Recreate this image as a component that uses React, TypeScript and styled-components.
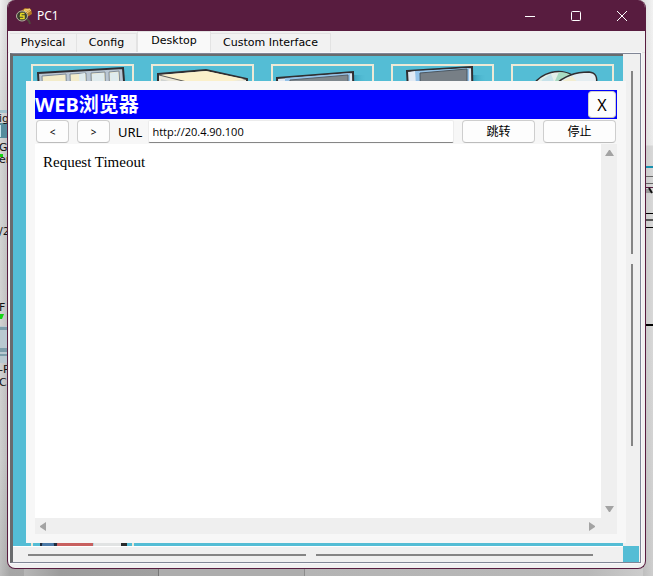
import React from "react";
import styled, { createGlobalStyle, css } from "styled-components";

const Global = createGlobalStyle`
  * { box-sizing: border-box; }
  html, body { margin: 0; overflow: hidden; }
  button, input { font: inherit; color: inherit; }
`;

const uiFont = `"Noto Sans", "Noto Sans CJK SC", sans-serif`;
const tabFont = `"DejaVu Sans", sans-serif`;

const Screen = styled.div`
  position: relative;
  height: 100vh;
  padding: 0 7px 7px;
  overflow: hidden;
  background: #dcdcdc;
`;

const Backdrop = styled.div<{ $side: "left" | "right" | "bottom" }>`
  position: absolute;
  overflow: hidden;
  ${(p) =>
    p.$side === "left" &&
    css`left: 0; top: 0; bottom: 0; width: 24px;
      background: linear-gradient(90deg, rgba(0,0,0,0), rgba(0,0,0,0.12) 10px), linear-gradient(#f0f0f0, #d6d6d6 25%, #cfcfcf 80%, #bcbcbc);`}
  ${(p) =>
    p.$side === "right" &&
    css`right: 0; top: 0; bottom: 0; width: 10px;
      background: linear-gradient(90deg, rgba(0,0,0,0.08), rgba(0,0,0,0)), linear-gradient(#f2f2f2, #ececec 145px, #d8d8d8 146px, #d8d8d8 60%, #cecece);`}
  ${(p) =>
    p.$side === "bottom" &&
    css`left: 0; right: 0; bottom: 0; height: 12px;
      background: linear-gradient(90deg, #c8c8c8, #9c9c9c 60px, #a0a0a0 158px, #777 158px, #777 159px, #adadad 159px, #adadad 304px, #8c8c8c 304px, #8c8c8c 305px, #b4b4b4 305px, #b8b8b8 90%, #d0d0d0);`}
`;

const DeviceLabel = styled.span<{ $top: number }>`
  position: absolute;
  left: -1px;
  top: ${(p) => p.$top}px;
  font: 11px/11px ${tabFont};
  color: #111;
  white-space: nowrap;
`;

const BackdropArt = styled.svg`
  position: absolute;
  inset: 0;
  display: block;
`;

const Window = styled.main`
  position: relative;
  display: flex;
  flex-direction: column;
  height: 100%;
  overflow: hidden;
  border: 1px solid #581c3f;
  border-top: 0;
  border-radius: 8px;
  background: #f0f0f0;
`;

const TitleBar = styled.header`
  display: flex;
  align-items: center;
  flex: none;
  height: 31px;
  padding-left: 8px;
  gap: 5px;
  background: #581c3f;
  color: #fff;
`;

const WindowTitle = styled.h1`
  flex: 1;
  margin: 0;
  font: 400 12px/16px ${uiFont};
`;

const Captions = styled.div`
  display: flex;
`;

const Caption = styled.button`
  display: flex;
  align-items: center;
  justify-content: center;
  width: 46px;
  height: 31px;
  padding: 0;
  border: 0;
  background: none;
  color: #fff;
`;

const TabList = styled.div`
  display: flex;
  align-items: flex-end;
  flex: none;
  height: 22px;
  padding-left: 2px;
  border-bottom: 1px solid #e2e2e2;
`;

const Tab = styled.button<{ $active?: boolean; $width: number }>`
  flex: none;
  width: ${(p) => p.$width}px;
  height: ${(p) => (p.$active ? 21 : 19)}px;
  padding: 0 0 ${(p) => (p.$active ? 2 : 0)}px;
  border: 1px solid #e3e3e3;
  border-left-width: ${(p) => (p.$active ? 1 : 0)}px;
  border-bottom: 0;
  background: ${(p) => (p.$active ? "#f9f9f9" : "#f2f2f2")};
  font: 11px/16px ${tabFont};
  color: #000;
`;

const Frame = styled.section`
  position: relative;
  flex: 1;
  min-height: 0;
  display: grid;
  grid-template: minmax(0, 1fr) 16px / minmax(0, 1fr) 17px;
  margin: 0 4px 5px 2px;
  border: 1px solid #808696;
  border-left: 3px solid #696b6d;
  outline: 1px solid #f8f8fa;
`;

const Desktop = styled.div`
  display: flex;
  flex-direction: column;
  justify-content: space-between;
  overflow: hidden;
  border-top: 2px solid #696b6d;
  padding: 8px 0 0 18px;
  background: #54bdd5;
`;

const IconRow = styled.div<{ $last?: boolean }>`
  display: flex;
  gap: 17px;
  ${(p) => p.$last && css`margin-bottom: -70px;`}
`;

const Tile = styled.div`
  flex: none;
  width: 103px;
  height: 103px;
  border: 2px solid #ede9d6;
`;

const TileArt = styled.svg`
  display: block;
  width: 99px;
  height: 99px;
`;

const Scroller = styled.div<{ $vertical?: boolean }>`
  display: flex;
  gap: 10px;
  background: #f0f0f0;
  ${(p) =>
    p.$vertical
      ? css`flex-direction: column; align-items: center; padding: 17px 0 100px;`
      : css`align-items: center; border-top: 1px solid #fff; padding: 0 30px 0 15px;`}
`;

const Thumb = styled.div<{ $vertical?: boolean }>`
  flex: 1;
  background: #858585;
  ${(p) => (p.$vertical ? css`width: 2px;` : css`height: 2px;`)}
`;

const Corner = styled.div`
  width: 16px;
  background: #54bdd5;
`;

const Browser = styled.section`
  position: absolute;
  inset: 27px 14px 19px 13px;
  display: flex;
  flex-direction: column;
  padding: 9px;
  background: #f7f7f7;
`;

const BrowserHeader = styled.header`
  display: flex;
  align-items: center;
  flex: none;
  height: 29px;
  padding-right: 1px;
  background: #0000fe;
  color: #fff;
`;

const BrowserTitle = styled.h2`
  flex: 1;
  margin: 0;
  font: 700 20px/28px ${uiFont};
`;

const buttonSizes = {
  nav: { width: 33, height: 23, text: 10 },
  action: { width: 73, height: 23, text: 12 },
  close: { width: 28, height: 27, text: 16 },
};

const Button = styled.button<{ $size: keyof typeof buttonSizes }>`
  flex: none;
  height: ${(p) => buttonSizes[p.$size].height}px;
  width: ${(p) => buttonSizes[p.$size].width}px;
  padding: 0;
  border: 1px solid #cecece;
  border-bottom-color: #bcbcbc;
  border-radius: 4px;
  background: #fdfdfd;
  color: #000;
  font: ${(p) => buttonSizes[p.$size].text}px/16px ${uiFont};
`;

const Toolbar = styled.form`
  display: flex;
  align-items: center;
  flex: none;
  gap: 8px;
  height: 25px;
  padding: 0 1px;
`;

const UrlField = styled.div`
  display: flex;
  align-items: center;
  flex: 1;
  gap: 6px;
  min-width: 0;
`;

const UrlLabel = styled.label`
  font: 13px/16px ${uiFont};
`;

const UrlInput = styled.input`
  flex: 1;
  min-width: 0;
  height: 23px;
  padding: 0 3px;
  border: 1px solid #ececec;
  border-bottom-color: #868686;
  border-radius: 2px;
  background: #fff;
  font: 11px/16px "Open Sans", sans-serif;
  outline: 0;
`;

const PageArea = styled.div`
  flex: 1;
  min-height: 0;
  display: grid;
  grid-template: minmax(0, 1fr) 16px / minmax(0, 1fr) 16px;
  background: #efefef;
`;

const Page = styled.article`
  padding: 9px 8px;
  background: #fff;
  font: 15px/18px "Liberation Serif", serif;
`;

const ArrowBar = styled.div<{ $vertical?: boolean }>`
  display: flex;
  justify-content: space-between;
  align-items: center;
  flex-direction: ${(p) => (p.$vertical ? "column" : "row")};
  padding: ${(p) => (p.$vertical ? "4px 0" : "0 4px")};
`;

const ArrowButton = styled.button`
  display: flex;
  padding: 0;
  border: 0;
  background: none;
`;

const Arrow = ({ d, label }: { d: string; label: string }) => (
  <ArrowButton type="button" aria-label={label}>
    <svg width="9" height="9" viewBox="0 0 9 9"><path d={d} fill="#a3a3a3" /></svg>
  </ArrowButton>
);

const AppIcon = () => (
  <svg width="16" height="16" viewBox="0 0 16 16">
    <path d="M5 3 9 0l6 1 1 5-5 3-6-2z" fill="#b57a22" />
    <path d="m8 2 6-1-4 3zM11 5l4-3" stroke="#f2d178" fill="#e8b84e" />
    <path d="m10 10 3 3 1 3" stroke="#4d4a3c" strokeWidth="2" fill="none" />
    <ellipse cx="6" cy="8" rx="5.500" ry="5" fill="#3c4030" stroke="#b6b3a0" />
    <path d="M8.500 5.500H5L4.500 8H8v2.500H4" stroke="#e8da26" strokeWidth="1.500" fill="none" />
  </svg>
);

const shadow = (id: string, x: number) => (
  <>
    <defs>
      <linearGradient id={id}>
        <stop offset="0" stopColor="#1f87a5" stopOpacity=".7" />
        <stop offset="1" stopColor="#54bdd5" stopOpacity="0" />
      </linearGradient>
    </defs>
    <path d={`M${x} 9h16v50h-16z`} fill={`url(#${id})`} />
  </>
);

const drawings = [
  <>
    {shadow("shade-a", 82)}
    <path d="M5 7 90 2l3 40H7z" fill="#b9c6d3" stroke="#302e31" strokeWidth="2" />
    <path d="m9 10 24-2 1 30H10zM37 8l16-1 1 30H38zM58 7l14-1 1 30H59zM76 6l10-1 2 30H77z" fill="#f3ecca" stroke="#7d8a98" />
    <path d="m59 8 12-1 1 30H60zM77 7l8-1 2 30h-9zM46 8l6-1 1 30h-6z" fill="#dfebee" />
  </>,
  <>
    <path d="m5 8 48-4 41 9v40H5z" fill="#eae7da" stroke="#302e31" strokeWidth="2" />
    <path d="m8 9 45-4 38 8-44 8z" fill="#fbf0cb" />
    <path d="m6 9 36 9" fill="none" stroke="#5a5a58" />
    <path d="m8 13 8 2H8z" fill="#cfd3d2" />
  </>,
  <>
    {shadow("shade-c", 78)}
    <path d="m4 12 76-6 1 50H5z" fill="#dfe9f2" stroke="#302e31" strokeWidth="2" />
    <path d="m12 12 65-5v50H12z" fill="#94c3ea" />
    <path d="M6 13h6v40H6z" fill="#dfe8f3" />
    <path d="m17 14 58-5v40H17z" fill="#7f888e" stroke="#56606a" />
  </>,
  <>
    {shadow("shade-d", 78)}
    <path d="m14 5 65-4 1 60H17z" fill="#dfe9f2" stroke="#302e31" strokeWidth="2" />
    <path d="m22 5 54-3v50H24z" fill="#94c3ea" />
    <path d="m17 6 5-1 2 40h-7z" fill="#e2eaf4" />
    <path d="m27 7 47-4v50H28z" fill="#777f86" stroke="#4b5660" />
  </>,
  <>
    <path d="M20 19C29 6 46 2 59 9L48 40H25z" fill="#e3efe9" stroke="#302e31" strokeWidth="1.500" />
    <path d="M42 15 46 6q7 0 12 3L48 20z" fill="#a9dbc2" />
    <path d="m30 13 8-5 4 10H26z" fill="#c6e2ea" />
    <path d="M42 19C52 9 66 6 76 6q10 1 7 13l-8 20H50z" fill="#e4edf1" stroke="#302e31" strokeWidth="1.500" />
    <path d="m44 18 15-8 8 9H46z" fill="#f2edd0" />
  </>,
];

const icons = ["IP Configuration", "Dial-up", "Terminal", "Command Prompt", "Web Browser"];

const labels = [
  { text: "ig", top: 113 },
  { text: "G", top: 142 },
  { text: "er", top: 154 },
  { text: "/2", top: 226 },
  { text: "F", top: 302 },
  { text: "-P", top: 364 },
  { text: "C2", top: 377 },
];

export default function App() {
  return (
    <Screen>
      <Global />
      <Backdrop $side="bottom" />
      <Backdrop $side="left">
        <BackdropArt width="10" height="576">
          <path d="M0 110h10v3H0z" fill="#a0c1cc" />
          <path d="M0 123h10v15H0z" fill="#568c9d" />
          <path d="M0 125h1v12H0z" fill="#c3e4ed" />
          <path d="M0 154h3v3H0z" fill="#13d413" />
          <path d="M0 314h4l-2 5H0z" fill="#13d413" />
          <path d="M0 326h10v37H0z" fill="#b9c9d1" />
          <path d="M0 327h10v3H0zM0 348h10v4H0zM0 354h10v2H0z" fill="#7c9daa" />
        </BackdropArt>
        {labels.map((l) => (
          <DeviceLabel key={l.text} $top={l.top}>{l.text}</DeviceLabel>
        ))}
      </Backdrop>
      <Backdrop $side="right">
        <BackdropArt width="10" height="576">
          <path d="M0 166h10v2H0z" fill="#168fae" />
          <path d="M0 176h10v1H0zM0 183h10v1H0z" fill="#666" />
          <path d="M0 187h10v1H0z" fill="#581c3f" />
          <path d="M0 189h6l2 4H0z" fill="#999" />
          <path d="m6 188 3 5" stroke="#111" strokeWidth="2" />
          <path d="M0 213h10v1H0zM0 227h10v1H0zM0 324h10v2H0z" fill="#000" />
          <path d="M0 219h10v2H0z" fill="#555" />
        </BackdropArt>
      </Backdrop>
      <Window>
        <TitleBar>
          <AppIcon />
          <WindowTitle>PC1</WindowTitle>
          <Captions>
            <Caption aria-label="Minimize">
              <svg width="10" height="10"><path d="M0 5.500h10" stroke="currentColor" /></svg>
            </Caption>
            <Caption aria-label="Maximize">
              <svg width="10" height="10"><rect x=".5" y=".5" width="9" height="9" rx="1" fill="none" stroke="currentColor" /></svg>
            </Caption>
            <Caption aria-label="Close">
              <svg width="10" height="10"><path d="m0 0 10 10M10 0 0 10" stroke="currentColor" /></svg>
            </Caption>
          </Captions>
        </TitleBar>
        <TabList role="tablist">
          <Tab role="tab" $width={67}>Physical</Tab>
          <Tab role="tab" $width={60}>Config</Tab>
          <Tab role="tab" $width={74} $active aria-selected>Desktop</Tab>
          <Tab role="tab" $width={120}>Custom Interface</Tab>
        </TabList>
        <Frame>
          <Desktop>
            <IconRow>
              {icons.map((name, i) => (
                <Tile key={name}>
                  <TileArt role="img" aria-label={name} viewBox="0 0 99 99">{drawings[i]}</TileArt>
                </Tile>
              ))}
            </IconRow>
            <IconRow $last>
              <Tile>
                <TileArt viewBox="0 0 99 99">
                  <path d="M7 20h18v30H7z" fill="#1d2c3d" />
                  <circle cx="15" cy="30" r="6" fill="#4c7ba8" />
                  <path d="M25 20h36l-3 30H22z" fill="#c8605f" />
                  <path d="M61 20h27v30H59z" fill="#e1e3e3" />
                  <path d="M88 20h6v30h-6z" fill="#292a2b" />
                </TileArt>
              </Tile>
            </IconRow>
          </Desktop>
          <Scroller $vertical><Thumb $vertical /><Thumb $vertical /></Scroller>
          <Scroller><Thumb /><Thumb /></Scroller>
          <Corner />
          <Browser>
            <BrowserHeader>
              <BrowserTitle>WEB浏览器</BrowserTitle>
              <Button $size="close" aria-label="Close browser">X</Button>
            </BrowserHeader>
            <Toolbar onSubmit={(e) => e.preventDefault()}>
              <Button $size="nav" type="button">&lt;</Button>
              <Button $size="nav" type="button">&gt;</Button>
              <UrlField>
                <UrlLabel htmlFor="url">URL</UrlLabel>
                <UrlInput id="url" defaultValue="http://20.4.90.100" />
              </UrlField>
              <Button $size="action" type="submit">跳转</Button>
              <Button $size="action" type="button">停止</Button>
            </Toolbar>
            <PageArea>
              <Page>Request Timeout</Page>
              <ArrowBar $vertical>
                <Arrow label="Scroll up" d="M4 2h1l4 6H0z" />
                <Arrow label="Scroll down" d="M0 1h9L5 7H4z" />
              </ArrowBar>
              <ArrowBar>
                <Arrow label="Scroll left" d="M7 0v9L1 5V4z" />
                <Arrow label="Scroll right" d="M1 0v9l6-4V4z" />
              </ArrowBar>
            </PageArea>
          </Browser>
        </Frame>
      </Window>
    </Screen>
  );
}
